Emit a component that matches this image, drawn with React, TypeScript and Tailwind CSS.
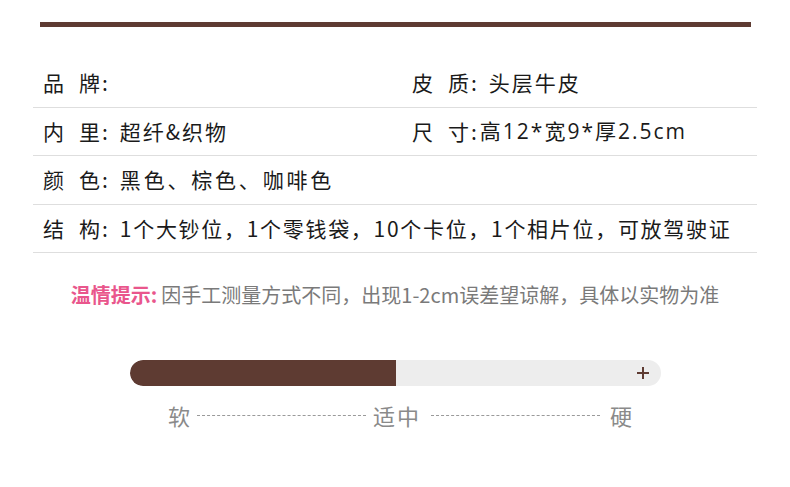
import React from 'react';

const font = { fontFamily: '"Noto Sans CJK SC", "Noto Sans", sans-serif' };

type Spec = { a: string; b: string; value: React.ReactNode; tight?: boolean; vcls?: string };

const left: Spec[] = [
  { a: '品', b: '牌', value: '' },
  { a: '内', b: '里', value: '超纤&织物' },
  { a: '颜', b: '色', value: '黑色、棕色、咖啡色', vcls: 'tracking-[2.8px]' },
  {
    a: '结',
    b: '构',
    value: '1个大钞位，1个零钱袋，10个卡位，1个相片位，可放驾驶证',
    vcls: 'tracking-[1.7px]',
  },
];

const right: (Spec | null)[] = [
  { a: '皮', b: '质', value: '头层牛皮' },
  {
    a: '尺',
    b: '寸',
    tight: true,
    value: (
      <>
        高<span className="font-['Open_Sans']">12*</span>宽<span className="font-['Open_Sans']">9*</span>厚
        <span className="font-['Open_Sans']">2.5cm</span>
      </>
    ),
  },
  null,
  null,
];

const Field: React.FC<{ spec: Spec }> = ({ spec }) => (
  <div className="flex items-center whitespace-nowrap">
    <span className="w-[36px] shrink-0">{spec.a}</span>
    <span className="shrink-0">{spec.b}:</span>
    <span className={(spec.tight ? 'ml-[1px] ' : 'ml-[10px] ') + (spec.vcls ?? '')}>{spec.value}</span>
  </div>
);

export default function App() {
  return (
    <div className="w-[790px] h-[487px] bg-white pt-[22px] overflow-hidden" style={font}>
      {/* top rule */}
      <div className="ml-[40px] w-[711px] h-[5px] bg-[#5e3b32]" />

      {/* spec table */}
      <div className="ml-[33px] w-[724px] mt-[32px] text-[21px] tracking-[2px] text-[#1a1a1a]">
        {left.map((row, i) => (
          <div
            key={i}
            className="grid grid-cols-[379px_1fr] h-[48.6px] items-center border-b border-[#dedede]"
          >
            <div className="pl-[10px] overflow-visible">
              <Field spec={row} />
            </div>
            <div>{right[i] && <Field spec={right[i] as Spec} />}</div>
          </div>
        ))}
      </div>

      {/* tip */}
      <div className="mt-[28px] h-[28px] flex items-center justify-center text-[20px] text-[#7a7a7a] whitespace-nowrap">
        <span className="font-bold text-[#e9568c]">温情提示:</span>
        <span className="ml-[4px]">因手工测量方式不同，出现1-2cm误差望谅解，具体以实物为准</span>
      </div>

      {/* softness bar */}
      <div className="mt-[51px] ml-[130px] w-[531px] h-[26px] rounded-full bg-[#ededed] flex overflow-hidden">
        <div className="w-[266px] h-full bg-[#5e3b32] rounded-l-full" />
        <div className="flex-1 flex items-center justify-end pr-[12px]">
          <svg width="12" height="12" viewBox="0 0 12 12">
            <path d="M6 0v12M0 6h12" stroke="#5e3b32" strokeWidth="2" />
          </svg>
        </div>
      </div>

      <div className="mt-[14px] ml-[168px] w-[464px] h-[30px] flex items-center text-[22px] text-[#8a8a8a]">
        <span>软</span>
        <div className="flex-1 mx-[7px] border-t border-dashed border-[#9a9a9a]" />
        <span className="tracking-[2px]">适中</span>
        <div className="flex-1 mx-[10px] border-t border-dashed border-[#9a9a9a]" />
        <span>硬</span>
      </div>
    </div>
  );
}
